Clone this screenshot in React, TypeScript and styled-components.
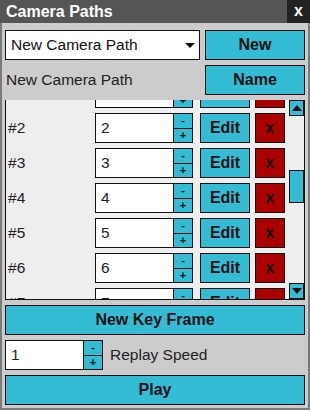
import React, { useLayoutEffect, useRef } from "react";
import styled, { createGlobalStyle } from "styled-components";

const Global = createGlobalStyle`
  html, body { margin: 0; padding: 0; background: #cccccc; }
  * { box-sizing: border-box; }
  body { font-family: "Liberation Sans", Arial, sans-serif; }
`;

const CYAN = "#33bcd4";
const RED = "#aa0000";
const LINE = "#111111";

const Window = styled.div`
  width: 310px;
  height: 410px;
  display: flex;
  flex-direction: column;
  background: #cccccc;
`;

const TitleBar = styled.div`
  height: 23px;
  background: #555555;
  display: flex;
  align-items: center;
  justify-content: space-between;
  padding-left: 6px;
`;

const Title = styled.span`
  color: #ffffff;
  font-weight: bold;
  font-size: 16px;
`;

const Close = styled.div`
  width: 23px;
  height: 23px;
  background: #222222;
  color: #ffffff;
  font-weight: bold;
  font-size: 16px;
  display: flex;
  align-items: center;
  justify-content: center;
  padding-bottom: 2px;
`;

const Body = styled.div`
  flex: 1;
  border: 2px solid #7a7a7a;
  border-top: none;
  padding: 7px 3px 3px 3px;
  display: flex;
  flex-direction: column;
  gap: 5px;
`;

const TopRow = styled.div`
  display: grid;
  grid-template-columns: 195px 100px;
  gap: 5px;
  height: 30px;
`;

const Select = styled.div`
  background: #ffffff;
  border: 1px solid ${LINE};
  display: flex;
  align-items: center;
  justify-content: space-between;
  padding: 0 4px 0 5px;
  font-size: 15.5px;
  color: #111;
`;

const Caret = styled.span`
  width: 0;
  height: 0;
  border-left: 5px solid transparent;
  border-right: 5px solid transparent;
  border-top: 5px solid #111;
  margin-top: 1px;
`;

const Button = styled.div<{ $bg?: string; $size?: number }>`
  background: ${(p) => p.$bg ?? CYAN};
  border: 1px solid ${LINE};
  display: flex;
  align-items: center;
  justify-content: center;
  font-weight: bold;
  font-size: ${(p) => p.$size ?? 16}px;
  color: #111;
`;

const WideButton = styled(Button)`
  height: 30px;
`;

const Label = styled.div`
  display: flex;
  align-items: center;
  font-size: 15.5px;
  color: #222;
  padding-left: 1px;
`;

const List = styled.div`
  height: 200px;
  background: #eeeeee;
  border: 1px solid ${LINE};
  border-top: none;
  display: flex;
`;

const Viewport = styled.div`
  flex: 1;
  overflow: hidden;
`;

const Rows = styled.div`
  display: flex;
  flex-direction: column;
  gap: 5px;
  padding: 5px 0;
`;

const Row = styled.div`
  display: flex;
  height: 30px;
  flex-shrink: 0;
`;

const RowLabel = styled.div`
  width: 89px;
  padding-left: 2px;
  display: flex;
  align-items: center;
  font-size: 15.5px;
  color: #222;
`;

const Field = styled.div<{ $w: number }>`
  width: ${(p) => p.$w}px;
  height: 30px;
  background: #ffffff;
  border: 1px solid ${LINE};
  display: flex;
  align-items: center;
  padding-left: 5px;
  font-size: 15.5px;
  color: #222;
`;

const Spin = styled.div`
  width: 19px;
  height: 30px;
  display: flex;
  flex-direction: column;
`;

const SpinBtn = styled.div`
  flex: 1;
  background: ${CYAN};
  border: 1px solid ${LINE};
  border-left: none;
  display: flex;
  align-items: center;
  justify-content: center;
  font-weight: bold;
  font-size: 11px;
  color: #111;
  line-height: 1;
  & + & { border-top: none; }
`;

const RowButton = styled(Button)<{ $w: number; $ml: number }>`
  width: ${(p) => p.$w}px;
  height: 30px;
  margin-left: ${(p) => p.$ml}px;
`;

const ScrollBar = styled.div`
  width: 15px;
  display: flex;
  flex-direction: column;
  justify-content: space-between;
  position: relative;
`;

const Arrow = styled.div<{ $up?: boolean }>`
  height: 16px;
  background: ${CYAN};
  border: 1px solid ${LINE};
  display: flex;
  align-items: center;
  justify-content: center;
  &::after {
    content: "";
    width: 0;
    height: 0;
    border-left: 5px solid transparent;
    border-right: 5px solid transparent;
    ${(p) => (p.$up ? `border-bottom: 6px solid #111;` : `border-top: 6px solid #111;`)}
  }
`;

const Thumb = styled.div`
  position: absolute;
  left: 0;
  right: 0;
  top: 70px;
  height: 33px;
  background: ${CYAN};
  border: 1px solid ${LINE};
`;

const SpeedRow = styled.div`
  display: flex;
  align-items: center;
  height: 30px;
`;

const SpeedLabel = styled.span`
  margin-left: 7px;
  font-size: 15.5px;
  color: #222;
`;

function Spinner() {
  return (
    <Spin>
      <SpinBtn>-</SpinBtn>
      <SpinBtn>+</SpinBtn>
    </Spin>
  );
}

export default function App() {
  const vp = useRef<HTMLDivElement>(null);
  useLayoutEffect(() => {
    if (vp.current) vp.current.scrollTop = 27;
  }, []);
  const frames = [1, 2, 3, 4, 5, 6, 7, 8];
  return (
    <>
      <Global />
      <Window>
        <TitleBar>
          <Title>Camera Paths</Title>
          <Close>x</Close>
        </TitleBar>
        <Body>
          <TopRow>
            <Select>
              <span>New Camera Path</span>
              <Caret />
            </Select>
            <Button>New</Button>
          </TopRow>
          <TopRow>
            <Label>New Camera Path</Label>
            <Button>Name</Button>
          </TopRow>
          <List>
            <Viewport ref={vp}>
              <Rows>
                {frames.map((n) => (
                  <Row key={n}>
                    <RowLabel>#{n}</RowLabel>
                    <Field $w={79}>{n}</Field>
                    <Spinner />
                    <RowButton $w={50} $ml={7}>Edit</RowButton>
                    <RowButton $w={30} $ml={5} $bg={RED}>x</RowButton>
                  </Row>
                ))}
              </Rows>
            </Viewport>
            <ScrollBar>
              <Arrow $up />
              <Thumb />
              <Arrow />
            </ScrollBar>
          </List>
          <WideButton>New Key Frame</WideButton>
          <SpeedRow>
            <Field $w={79}>1</Field>
            <Spinner />
            <SpeedLabel>Replay Speed</SpeedLabel>
          </SpeedRow>
          <WideButton>Play</WideButton>
        </Body>
      </Window>
    </>
  );
}
